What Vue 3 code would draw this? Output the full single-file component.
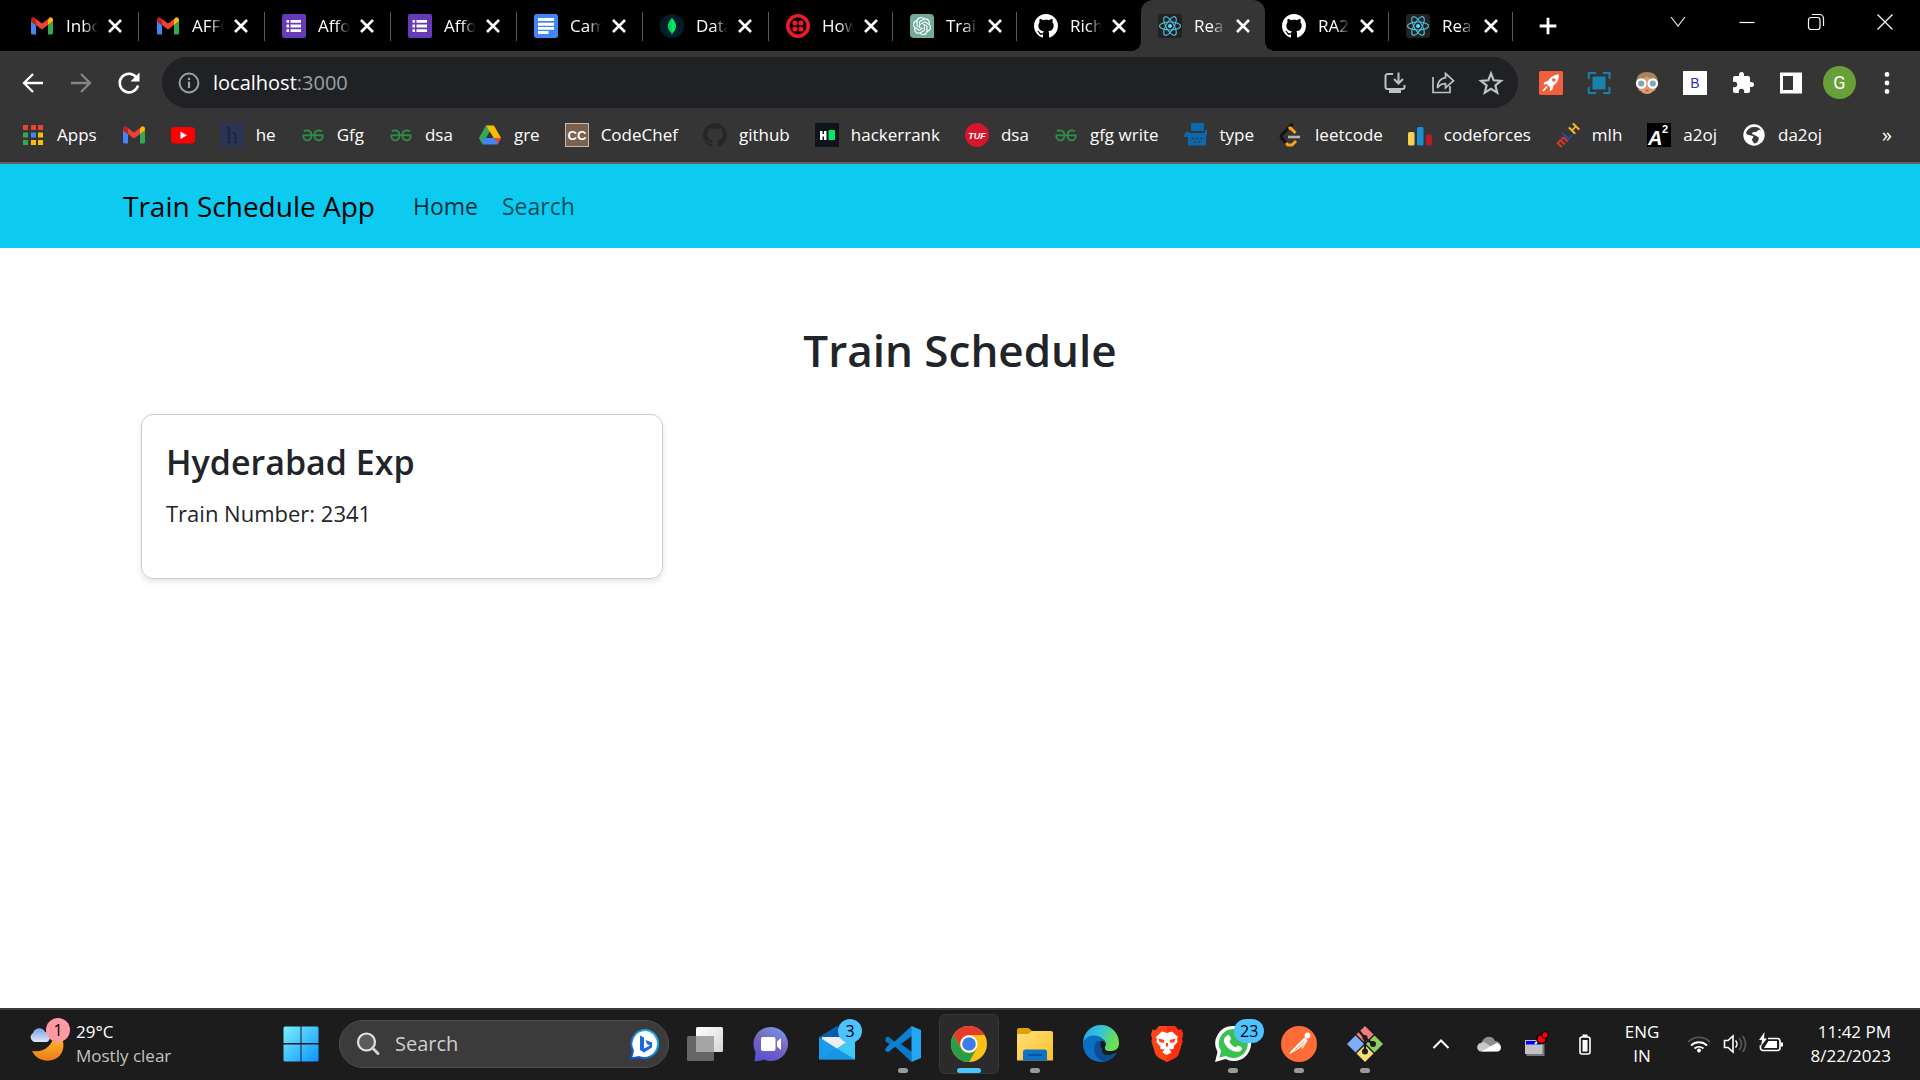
<script setup>
const icons = {
  gmail: '<path fill="#4285f4" d="M2.6 20.5H6V11L1 7.3V19a1.6 1.5 0 0 0 1.6 1.5z"/><path fill="#34a853" d="M18 20.5h3.4A1.6 1.5 0 0 0 23 19V7.3L18 11z"/><path fill="#fbbc04" d="M18 5.5V11l5-3.7V5.8c0-2.2-2.4-3.2-4-1.900z"/><path fill="#ea4335" d="M6 11V5l6 4.500L18 5v6l-6 4.500z"/><path fill="#c5221f" d="M1 5.800v1.500L6 11V5l-1-1.100C3.400 2.600 1 3.600 1 5.800z"/>',
  forms: '<rect width="24" height="24" rx="2" fill="#673ab7"/><g fill="#fff"><path d="M4.500 6h2.500v2.800H4.500zM4.500 10.600h2.500v2.800H4.500zM4.500 15.200h2.500V18H4.500zM8.500 6H19v2.800H8.500zM8.500 10.600H19v2.800H8.500zM8.500 15.200H19V18H8.500z"/></g>',
  docs: '<rect width="24" height="24" rx="2.500" fill="#4285f4"/><path fill="#fff" d="M4 4h16v3H4zM4 8.800h16v3H4zM4 13h16v2.800H4zM4 17h10.500v3H4z"/>',
  mongo: '<circle cx="12" cy="12" r="12" fill="#001e2b"/><path fill="#00ed64" d="M12 3.500c.6 1.700 4 4.200 4 8.800 0 3.600-2.300 5.700-3.500 6.600L12.300 21h-.6l-.2-2.100C10.300 18 8 15.900 8 12.300c0-4.600 3.400-7.100 4-8.800z"/><path fill="#00a84a" d="M12 4v15l-.4-.2C10.300 17.800 8.700 15.900 8.700 12.300 8.700 8.300 11.400 5.900 12 4z" opacity=".35"/>',
  twilio: '<circle cx="12" cy="12" r="10.200" fill="none" stroke="#eb1b24" stroke-width="3.600"/><g fill="#eb1b24"><circle cx="9" cy="9" r="2.600"/><circle cx="15" cy="9" r="2.600"/><circle cx="9" cy="15" r="2.600"/><circle cx="15" cy="15" r="2.600"/></g>',
  openai: '<path fill="#74aa9c" d="M4 0h16a4 4 0 0 1 4 4v20H4a4 4 0 0 1-4-4V4a4 4 0 0 1 4-4z"/><path transform="translate(2.900 2.900) scale(.76)" fill="#fff" d="M22.282 9.821a5.985 5.985 0 0 0-.516-4.911 6.046 6.046 0 0 0-6.510-2.900A6.065 6.065 0 0 0 4.981 4.182a5.985 5.985 0 0 0-3.998 2.900 6.046 6.046 0 0 0 .743 7.097 5.980 5.980 0 0 0 .511 4.911 6.051 6.051 0 0 0 6.515 2.900A5.985 5.985 0 0 0 13.260 24a6.056 6.056 0 0 0 5.772-4.206 5.989 5.989 0 0 0 3.998-2.900 6.056 6.056 0 0 0-.748-7.073zm-9.022 12.608a4.476 4.476 0 0 1-2.876-1.041l.142-.080 4.778-2.758a.795.795 0 0 0 .393-.681v-6.737l2.020 1.169a.071.071 0 0 1 .038.052v5.583a4.504 4.504 0 0 1-4.495 4.494zm-9.661-4.125a4.471 4.471 0 0 1-.535-3.014l.142.085 4.783 2.758a.771.771 0 0 0 .781 0l5.843-3.369v2.332a.080.080 0 0 1-.033.062L9.740 19.950a4.499 4.499 0 0 1-6.141-1.646zM2.341 7.896a4.485 4.485 0 0 1 2.366-1.973V11.600a.766.766 0 0 0 .388.677l5.814 3.354-2.020 1.169a.076.076 0 0 1-.071 0l-4.830-2.787A4.504 4.504 0 0 1 2.341 7.872zm16.596 3.856L13.104 8.364 15.119 7.200a.076.076 0 0 1 .071 0l4.830 2.791a4.494 4.494 0 0 1-.677 8.104v-5.677a.790.790 0 0 0-.407-.667zm2.011-3.023l-.142-.085-4.774-2.782a.776.776 0 0 0-.785 0L9.409 9.230V6.897a.066.066 0 0 1 .028-.062l4.830-2.787a4.499 4.499 0 0 1 6.680 4.660zM8.307 12.863l-2.020-1.164a.080.080 0 0 1-.038-.057V6.074a4.499 4.499 0 0 1 7.376-3.454l-.142.081L8.704 5.459a.795.795 0 0 0-.393.681zm1.098-2.365l2.602-1.500 2.607 1.500v2.999l-2.597 1.500-2.607-1.500z"/>',
  github: '<path transform="scale(1.500)" fill="#fff" d="M8 0C3.580 0 0 3.580 0 8c0 3.540 2.290 6.530 5.470 7.590.400.070.550-.170.550-.380 0-.190-.010-.820-.010-1.490-2.010.370-2.530-.490-2.690-.940-.090-.230-.480-.940-.820-1.130-.280-.150-.680-.520-.010-.530.630-.010 1.080.580 1.230.820.720 1.210 1.870.870 2.330.660.070-.520.280-.870.510-1.070-1.780-.200-3.640-.890-3.640-3.950 0-.870.310-1.590.820-2.150-.080-.200-.360-1.020.080-2.120 0 0 .670-.210 2.200.820.640-.180 1.320-.270 2-.270s1.360.090 2 .270c1.530-1.040 2.200-.820 2.200-.820.440 1.100.160 1.920.080 2.120.510.560.820 1.270.820 2.150 0 3.070-1.870 3.750-3.650 3.950.290.250.540.730.540 1.480 0 1.070-.010 1.930-.010 2.200 0 .210.150.460.550.380A8.010 8.010 0 0 0 16 8c0-4.420-3.580-8-8-8z"/>',
  react: '<rect width="24" height="24" rx="3" fill="#222"/><g fill="none" stroke="#4fc3e0" stroke-width="1.100"><ellipse cx="12" cy="12" rx="10.500" ry="4"/><ellipse cx="12" cy="12" rx="10.500" ry="4" transform="rotate(60 12 12)"/><ellipse cx="12" cy="12" rx="10.500" ry="4" transform="rotate(120 12 12)"/></g><circle cx="12" cy="12" r="2" fill="#61dafb"/>',
  close: '<path d="M6 6l12 12M18 6L6 18" stroke="#fff" stroke-width="2.600" fill="none"/>',
  plus: '<path d="M12 2v20M2 12h20" stroke="#fff" stroke-width="3.400" fill="none"/>',
  chevron: '<path d="M5 7l7 9 7-9" stroke="#e8e8e8" stroke-width="1.200" fill="none"/>',
  minimize: '<path d="M4.500 12.500h15" stroke="#fff" stroke-width="1.200"/>',
  restore: '<rect x="4.500" y="7.500" width="11.500" height="12" rx="2.500" fill="none" stroke="#fff" stroke-width="1.200"/><path d="M8 4.500h7.500a4 4 0 0 1 4 4V16" fill="none" stroke="#fff" stroke-width="1.200"/>',
  winclose: '<path d="M4.500 4.500l15 15M19.500 4.500l-15 15" stroke="#fff" stroke-width="1.200"/>',
  back: '<path d="M22 12H3.500M12 3l-9 9 9 9" fill="none" stroke="#fff" stroke-width="2.300"/>',
  forward: '<path d="M2 12h18.500M12 3l9 9-9 9" fill="none" stroke="#858585" stroke-width="2.300"/>',
  reload: '<path d="M19.500 6.500A9.300 9.300 0 1 0 21 14.500" fill="none" stroke="#fff" stroke-width="2.600"/><path d="M22.500 1.500v9h-9z" fill="#fff"/>',
  info: '<circle cx="12" cy="12" r="9.400" fill="none" stroke="#9aa0a6" stroke-width="2"/><path d="M10.900 10.500h2.200V17h-2.200zM10.900 6.800h2.200V9h-2.200z" fill="#9aa0a6"/>',
  install: '<path d="M10 3H4.500A2 2 0 0 0 2.500 5v11a2 2 0 0 0 2 2h15a2 2 0 0 0 2-2v-2M15.500 1.500V12M11 8l4.500 4.500L20 8" fill="none" stroke="#bdc1c6" stroke-width="2"/><path d="M6 19h12v3H6z" fill="#bdc1c6"/>',
  share: '<path d="M2 6v15.500h17V15" fill="none" stroke="#bdc1c6" stroke-width="1.700"/><path d="M14.500 2.500l8 7.200-8 7.200v-4.200c-4 0-6.500 1.500-8 4.300 0-6 3-9.500 8-10.300z" fill="none" stroke="#bdc1c6" stroke-width="1.700"/>',
  star: '<path d="M12 2.500l2.700 6.800 7.300.500-5.600 4.700 1.800 7.100L12 17.700l-6.200 3.900 1.800-7.100L2 9.800l7.300-.500z" fill="none" stroke="#bdc1c6" stroke-width="2.200"/>',
  rocket: '<rect width="24" height="24" rx="1.500" fill="#f25f3c"/><path d="M20 3.500c-5 0-8.500 2.500-10.500 6l-4 1.500-1 2.500 3.500-.3 3 3-.2 3.700 2.500-1.200 1.300-4.200c3.500-2.200 5.400-6 5.400-11z" fill="#fff"/><path d="M8 15.500l-4 4.500" stroke="#fff" stroke-width="1.800"/><circle cx="14.800" cy="9" r="1.800" fill="#f25f3c"/>',
  capture: '<path d="M5.500 5.500h13v13h-13z" fill="#1583ab"/><path d="M1.800 8V2H9M16 2h6.500v6M22.500 16v6H16M9 22H1.800v-6" fill="none" stroke="#1583ab" stroke-width="2"/>',
  face: '<path d="M1.500 14C0 5 5 1 12 1s12 4 10.500 13L20 20H4z" fill="#a5825a"/><path d="M4 11c1-4 5-3 8-6 2 3 7 2 8 6v4c0 5-4 8-8 8s-8-3-8-8z" fill="#dc9b76"/><circle cx="6.200" cy="12.500" r="4.200" fill="#7fa8b5" stroke="#fff" stroke-width="2.200"/><circle cx="17.800" cy="12.500" r="4.200" fill="#7fa8b5" stroke="#fff" stroke-width="2.200"/><path d="M10.500 19.500h3" stroke="#ae5545" stroke-width="1.500"/>',
  bold: '<rect width="24" height="24" fill="#fff"/><text x="12" y="17" text-anchor="middle" font-family="Liberation Sans, sans-serif" font-size="14" fill="#2c2fb8">B</text>',
  puzzle: '<path d="M20.500 11H19V7a2 2 0 0 0-2-2h-4V3.500a2.500 2.500 0 0 0-5 0V5H4a2 2 0 0 0-2 2v3.800h1.500a2.700 2.700 0 0 1 0 5.400H2V20a2 2 0 0 0 2 2h3.800v-1.500a2.700 2.700 0 0 1 5.400 0V22H17a2 2 0 0 0 2-2v-4h1.500a2.500 2.500 0 0 0 0-5z" fill="#fff"/>',
  panel: '<path d="M1 1.500h22v21H1zM4 5v14h10V5z" fill="#fff" fill-rule="evenodd"/>',
  dots: '<g fill="#fff"><circle cx="12" cy="3.500" r="2.400"/><circle cx="12" cy="12" r="2.400"/><circle cx="12" cy="20.500" r="2.400"/></g>',
  apps: '<path fill="#ea4335" d="M2 2h5v5H2zM10 2h5v5h-5zM17 2h5v5h-5z"/><path fill="#34a853" d="M2 9.500h5v5H2zM2 17h5v5H2z"/><path fill="#4285f4" d="M10 9.500h5v5h-5z"/><path fill="#fbbc04" d="M17 9.500h5v5h-5zM10 17h5v5h-5zM17 17h5v5h-5z"/>',
  youtube: '<rect y="4" width="24" height="16.500" rx="4" fill="#f00"/><path d="M9.500 8.500v7.500l6.500-3.700z" fill="#fff"/>',
  hackerearth: '<rect width="24" height="24" fill="#2c3454"/><text x="12" y="20" text-anchor="middle" font-family="Liberation Serif, serif" font-size="24" fill="#1c2446">h</text>',
  gfg: '<g fill="none" stroke="#2f8d46" stroke-width="1.800"><path d="M3 8.500C5 6.800 10.500 6.500 10.500 12c0 7-8 7-8.300 1"/><path d="M21 8.500C19 6.800 13.500 6.500 13.500 12c0 7 8 7 8.300 1"/><path d="M1.500 12.300h21"/></g>',
  drive: '<path fill="#188038" d="M8 2.500h4.500L5 21.500 1 15z"/><path fill="#34a853" d="M8 2.500l4 6L4 21l-3-6z"/><path fill="#fbbc04" d="M8 2.500h8L23 15h-7.500z"/><path fill="#4285f4" d="M5.500 15H23l-3.500 6.500h-15z"/><path fill="#ea4335" d="M16 15h7l-3 5.500z"/><path fill="#353535" d="M12 9l3.500 6h-7z"/>',
  codechef: '<rect x=".5" y=".5" width="23" height="23" fill="#7a6250" stroke="#c9b9a6"/><text x="12" y="17" text-anchor="middle" font-family="Liberation Sans, sans-serif" font-weight="700" font-size="13" fill="#fff">CC</text>',
  hackerrank: '<rect width="24" height="24" fill="#0e141e"/><path d="M5 8h2.500v3H9V8h2.500v9H9v-3.500H7.500V17H5z" fill="#fff"/><path d="M13.500 7H20v10h-6.500z" fill="#00ea64"/>',
  tuf: '<circle cx="12" cy="12" r="12" fill="#d6162c"/><text x="12" y="15.500" text-anchor="middle" font-family="Liberation Sans, sans-serif" font-style="italic" font-weight="700" font-size="9" fill="#fff">TUF</text>',
  typewriter: '<path fill="#0c69ac" d="M7 0h13v8H7zM0 12l2-3h3l1 1h14l1-1V7h2v5l-1 2v8.500H4V14H0z"/><g fill="#2d4258"><circle cx="8.500" cy="15.500" r="1.200"/><circle cx="13" cy="15.500" r="1.200"/><circle cx="17.500" cy="15.500" r="1.200"/><circle cx="10.500" cy="19" r="1.200"/><circle cx="15.500" cy="19" r="1.200"/></g>',
  leetcode: '<path d="M13.500 1L3 11.500a3 3 0 0 0 0 4L8 21" fill="none" stroke="#111" stroke-width="3"/><path d="M9.500 5.500l2-.500 5 5M7 20l2 2h4l4-4" fill="none" stroke="#ffa116" stroke-width="3"/><path d="M9 14h12" stroke="#b3b3b3" stroke-width="2.600"/>',
  codeforces: '<rect y="9" width="6.500" height="13.500" rx="1.500" fill="#f7cf52"/><rect x="9" y="4" width="6.500" height="18.500" rx="1.500" fill="#1b8fd1"/><rect x="18" y="11.500" width="6" height="11" rx="1.500" fill="#b71c26"/>',
  mlh: '<g transform="rotate(-45 12 12)" font-family="Liberation Sans, sans-serif" font-weight="700" font-size="13"><text x="-3" y="16" fill="#e73427">m</text><text x="8" y="16" fill="#1d539f">L</text><text x="16" y="16" fill="#f8b92a">H</text></g>',
  a2: '<rect width="24" height="24" fill="#000"/><text x="1" y="22" font-family="Liberation Sans, sans-serif" font-style="italic" font-weight="700" font-size="20" fill="#fff">A</text><text x="15" y="10" font-family="Liberation Sans, sans-serif" font-weight="700" font-size="11" fill="#fff">2</text>',
  globe: '<circle cx="12" cy="12" r="10.700" fill="#fff"/><path d="M13 4c-5 0-7 2-9 5.500 1 3 4 2.500 7 3.500 1 2-1 2-1 4l2 3.500c4 0 4-3 5-5-1-3-5-3-7-5 0-2 3-1 5-2 1-1 1-2 4-1.500C18 5.500 16 4 13 4z" fill="#3a3a3a"/>',
  weather: '<defs><linearGradient id="moon" x2="0" y2="1"><stop offset="0" stop-color="#ffc83a"/><stop offset="1" stop-color="#f07a18"/></linearGradient><linearGradient id="cloud" x2="0" y2="1"><stop offset="0" stop-color="#7f9fe8"/><stop offset="1" stop-color="#dfe8fb"/></linearGradient></defs><path d="M26 5c12 6 10 21 2 26-9 5-20 3-25-7 12 2 21-5 23-19z" fill="url(#moon)"/><path d="M5 15a5 5 0 0 1-1-9C6 0 14 0 16 5c5 0 7 8 2 10z" fill="url(#cloud)"/>',
  windows: '<defs><linearGradient id="win" x2="1" y2="1"><stop offset="0" stop-color="#79f0ff"/><stop offset="1" stop-color="#0a93ff"/></linearGradient></defs><path fill="url(#win)" d="M2 .5h15.500v16.500H.5V2A1.500 1.500 0 0 1 2 .5zM18.500.5H34A1.500 1.500 0 0 1 35.500 2v15h-17zM.5 18.500h17v17H2A1.500 1.500 0 0 1 .5 34zM18.500 18.500h17V34a1.500 1.500 0 0 1-1.500 1.500H18.500z"/>',
  search: '<circle cx="10.500" cy="10" r="8.500" fill="#5b5b5b" stroke="#e4e4e4" stroke-width="2.200"/><path d="M16.500 16l5.500 5.500" stroke="#d2d2d2" stroke-width="3" stroke-linecap="round"/>',
  bing: '<defs><linearGradient id="bing" x1="1" x2="0" y2="1"><stop offset="0" stop-color="#1fc8f0"/><stop offset="1" stop-color="#1448c8"/></linearGradient></defs><path d="M15.500 1A14 14 0 1 1 9 28L1 29.500l2-8A14 14 0 0 1 15.500 1z" fill="#fff" stroke="url(#bing)" stroke-width="2"/><path d="M10 6.500l4 2v11l6-3-3-1.500-1.500-4 6.500 2.500v5l-8 5-4-2.500z" fill="#1b68e0"/>',
  taskview: '<defs><linearGradient id="tv" x2="1" y2="1"><stop offset="0" stop-color="#fff"/><stop offset="1" stop-color="#d5d5d5"/></linearGradient></defs><rect x="9" y="1" width="27" height="25" rx="1.500" fill="url(#tv)"/><rect y="10" width="27" height="25" rx="1.500" fill="#666"/><path d="M9 10h18v16H9z" fill="#a5a5a5"/>',
  chat: '<defs><linearGradient id="chat" x1=".8" x2=".3" y2="1"><stop offset="0" stop-color="#6f9bf0"/><stop offset=".45" stop-color="#7c67bd"/><stop offset="1" stop-color="#5652cf"/></linearGradient></defs><path d="M18 1a17 17 0 1 1-7 32.500C8 35 4 35.500 1.500 35L2.500 26A17 17 0 0 1 18 1z" fill="url(#chat)"/><rect x="8" y="11" width="14.500" height="14" rx="2" fill="#fff"/><path d="M24 15.500l4-3.500v12l-4-3.500z" fill="#fff"/>',
  mail: '<path d="M0 11L18 0l18 11v6H0z" fill="#0a5bb0"/><path d="M3 11h30v12H3z" fill="#eee"/><path d="M0 11l18 11.500L36 11v22.500H0z" fill="#1a9bea"/><path d="M36 11v22.500L14 20.500l4 2z" fill="#3fcaf5"/><path d="M0 33.500h36L18 22.500z" fill="#1a8fe0" opacity=".6"/>',
  vscode: '<path d="M26.500 0L10 16 3 10.500.5 11.800v3.400L4.500 18l-4 4.500v2L3 26l7-5.500L26.500 36 27 26l-11-8 11-8z" fill="#0b78c8"/><path d="M27 8.500L3 26.500.5 25v-2.500L27 0z" fill="#1389d8" opacity=".5"/><path d="M26.500 0L36 4v28l-9.500 4z" fill="#25a6f2"/>',
  chrome: '<circle cx="18" cy="18" r="18" fill="#fbc116"/><path d="M2.400 9A18 18 0 0 1 33.600 9H18a9 9 0 0 0-7.800 13.500z" fill="#e33b2e"/><path d="M2.400 9A18 18 0 0 0 18 36l7.800-13.500A9 9 0 0 1 10.200 22.500z" fill="#2a9d47"/><circle cx="18" cy="18" r="8.500" fill="#fff"/><circle cx="18" cy="18" r="6.800" fill="#3b7ded"/>',
  explorer: '<defs><linearGradient id="fold" x2="1" y2="1"><stop offset="0" stop-color="#ffe07a"/><stop offset="1" stop-color="#fdc028"/></linearGradient></defs><path d="M0 12V4a2 2 0 0 1 2-2h9.500l3.500 3v5z" fill="#e0a000"/><path d="M15 5h19a2 2 0 0 1 2 2v27.500H0V8h11z" fill="url(#fold)"/><path d="M6 34.500V26a2.500 2.500 0 0 1 2.500-2.500h19A2.500 2.500 0 0 1 30 26v8.500z" fill="#0f74c8"/><path d="M11 29h14" stroke="#0a4c8c" stroke-width="1.500"/>',
  edge: '<defs><linearGradient id="edgeTop" x2="1" y2=".4"><stop offset="0" stop-color="#25a2ea"/><stop offset=".5" stop-color="#35c4d8"/><stop offset="1" stop-color="#6de04d"/></linearGradient></defs><path d="M0 17A18 18 0 0 1 36 17c0 7-5 8-9 8-5 0-6-2-5-4 4-7-7-14-22-4z" fill="url(#edgeTop)"/><path d="M0 17c2-8 14-10 20-4 3 3 2 6 1 7-5 3-2 14 12 7-3 6-9 9-15 9A18 18 0 0 1 0 17z" fill="#0d6fc4"/><path d="M14 15c-6 7-2 19 8 20.500C28 34 32 31 33.500 27c-12 6-18-1-13-7l-1-5z" fill="#0f4c94"/><path d="M19 14.500c-2 1.500-2.500 5-.5 7.500 2 2.300 3.500 2.800 5.500 3-2-1-3-2.500-2-4 1-2 .5-5-3-6.500z" fill="#1c1c1c"/>',
  brave: '<path d="M10 0h16l3.500 4 3-.5 1.500 5-1 4 .5 3-4 13-2.500 3L18 36l-9-4.500L6.500 28.500l-4-13 .5-3-1-4 1.500-5 3 .5z" fill="#fb4516"/><path d="M18 0h8l3.500 4 3-.5 1.500 5-1 4 .5 3-4 13-2.500 3L18 36z" fill="#ff2510" opacity=".7"/><path d="M18 7l5-1.500 6 5.500-1 2 .5 3-4 4.500.5 2-3 1-2-1 2.500 4L18 29l-4.500-2.500 2.500-4-2 1-3-1 .5-2-4-4.500.5-3-1-2 6-5.500z" fill="#fff"/><path d="M9.500 12.500l6 1.500-1 3-4-1zM26.500 12.500l-6 1.500 1 3 4-1zM17 17h2v3l-1 1-1-1z" fill="#fb4516"/>',
  whatsapp: '<path d="M18.500 0a17.500 17.500 0 1 1-8 33L0 36l2.500-10A17.500 17.500 0 0 1 18.500 0z" fill="#fff"/><path d="M18.500 3a14.500 14.500 0 1 1-7.500 27L4.500 31.500 6 25A14.500 14.500 0 0 1 18.500 3z" fill="#3bc150"/><path d="M12 9.500c2-1.500 3.500 1 4 3.500l-1.500 2.500c1 2.500 3 4.500 6 6L23 19.500c3 1 5 2 3.500 4.500C21 30 7 20 9 12.500z" fill="#fff"/>',
  postman: '<circle cx="18" cy="18" r="18" fill="#ff6c37"/><circle cx="26.500" cy="9.500" r="2.900" fill="#fff"/><path d="M23.500 11.500l3 2.500L19 22l-7.500 4.500L8 28.500l2-3.500 5-5z" fill="#fff"/><path d="M26 14l-5 8.500" stroke="#fff" stroke-width="1.200"/><path d="M14 24l9.500-9" stroke="#ff6c37" stroke-width=".8"/>',
  git: '<path d="M18 0l8.500 8.500L18 17l-8.500-8.500z" fill="#f47c80"/><path d="M27.500 9.500L36 18l-8.500 8.500L19 18z" fill="#8ccf62"/><path d="M8.500 9.500L17 18l-8.500 8.500L0 18z" fill="#7eadfa"/><path d="M18 19l8.500 8.500L18 36l-8.500-8.500z" fill="#fbdc78"/><path d="M12 5l6 7v14M18 12l8 6" stroke="#1c1c1c" stroke-width="2.200" fill="none"/><circle cx="18" cy="11.500" r="2.600" fill="#1c1c1c"/><circle cx="18" cy="25.500" r="3" fill="#1c1c1c"/><circle cx="26" cy="18" r="3" fill="#1c1c1c"/>',
  up: '<path d="M4.500 16l7.500-7.500 7.500 7.500" fill="none" stroke="#fff" stroke-width="2"/>',
  onedrive: '<path d="M4 19C-1 18-1 11 4.500 10.500 7 3.500 16 3 18 9c6 0 8 8 3 10z" fill="#8f8f8f"/><path d="M4 19.500c-4-.5-5-5-2-7.500l5-2 14.500 9z" fill="#c9c9c9"/><path d="M4.500 19.500L19.500 11c5 1 6 7 1.500 8.500z" fill="#fff"/>',
  device: '<path d="M1.500 10h18v14h-18z" fill="#777"/><path d="M0 8h17.500v14H0z" fill="#c3c3c3"/><path d="M1 9h15v3.500H1z" fill="#00f"/><path d="M10 12l4-4" stroke="#eee" stroke-width="2"/><circle cx="16.500" cy="7" r="4.600" fill="#f00" stroke="#000" stroke-width="1.500"/><circle cx="20" cy="3" r="3.300" fill="#f00" stroke="#000"/>',
  cell: '<rect x="7" y="5" width="10" height="17" rx="2" fill="none" stroke="#fff" stroke-width="1.600"/><path d="M9.500 8h5v11.500h-5zM9.500 2.500h5V5h-5z" fill="#fff"/>',
  wifi: '<path d="M1 10a15.500 15.500 0 0 1 22 0" fill="none" stroke="#555" stroke-width="1.800"/><path d="M4 13.500a11.500 11.500 0 0 1 16 0M7.500 16.500a7 7 0 0 1 9 0" fill="none" stroke="#fff" stroke-width="1.800"/><circle cx="12" cy="18.500" r="2" fill="#fff"/>',
  volume: '<path d="M1.500 8.500H5L10 4v16l-5-4.500H1.500z" fill="none" stroke="#fff" stroke-width="1.600"/><path d="M12.500 8.500a5 5 0 0 1 0 7" fill="none" stroke="#fff" stroke-width="1.600"/><path d="M16 6a8.500 8.500 0 0 1 0 12M19.500 4a12 12 0 0 1 0 16" fill="none" stroke="#5a5a5a" stroke-width="1.600"/>',
  battery: '<path d="M9 6.500h9.500a2.500 2.500 0 0 1 2.500 2.500v7a2.500 2.500 0 0 1-2.500 2.500H4A2.500 2.500 0 0 1 1.500 16v-3" fill="none" stroke="#fff" stroke-width="1.700"/><path d="M9.500 9h8.500v7H5zM21.500 10.500H24v4h-2.500z" fill="#fff"/><path d="M5.500 0L0 8h3L2 14l6-7.500H5z" fill="#fff"/>'
}

const tabs = [
  { icon: 'gmail', title: 'Inbo', wide: true },
  { icon: 'gmail', title: 'AFFO', wide: true },
  { icon: 'forms', title: 'Affo', wide: true },
  { icon: 'forms', title: 'Affo', wide: true },
  { icon: 'docs', title: 'Cam', wide: true },
  { icon: 'mongo', title: 'Data', wide: true },
  { icon: 'twilio', title: 'How' },
  { icon: 'openai', title: 'Trai' },
  { icon: 'github', title: 'Rich', last: true },
  { icon: 'react', title: 'Rea', active: true },
  { icon: 'github', title: 'RA2' },
  { icon: 'react', title: 'Rea' }
]

const extensions = ['rocket', 'capture', 'face', 'bold', 'puzzle', 'panel']

const bookmarks = [
  { icon: 'apps', label: 'Apps' },
  { icon: 'gmail', name: 'Gmail' },
  { icon: 'youtube', name: 'YouTube' },
  { icon: 'hackerearth', label: 'he' },
  { icon: 'gfg', label: 'Gfg' },
  { icon: 'gfg', label: 'dsa' },
  { icon: 'drive', label: 'gre' },
  { icon: 'codechef', label: 'CodeChef' },
  { icon: 'github', label: 'github', dim: true },
  { icon: 'hackerrank', label: 'hackerrank' },
  { icon: 'tuf', label: 'dsa' },
  { icon: 'gfg', label: 'gfg write' },
  { icon: 'typewriter', label: 'type' },
  { icon: 'leetcode', label: 'leetcode' },
  { icon: 'codeforces', label: 'codeforces' },
  { icon: 'mlh', label: 'mlh' },
  { icon: 'a2', label: 'a2oj' },
  { icon: 'globe', label: 'da2oj' }
]

const taskApps = [
  { icon: 'taskview', name: 'Task view' },
  { icon: 'chat', name: 'Chat' },
  { icon: 'mail', name: 'Mail', badge: '3' },
  { icon: 'vscode', name: 'Visual Studio Code', open: true },
  { icon: 'chrome', name: 'Google Chrome', open: true, active: true },
  { icon: 'explorer', name: 'File Explorer', open: true },
  { icon: 'edge', name: 'Microsoft Edge' },
  { icon: 'brave', name: 'Brave' },
  { icon: 'whatsapp', name: 'WhatsApp', open: true, badge: '23' },
  { icon: 'postman', name: 'Postman', open: true },
  { icon: 'git', name: 'Git Bash', open: true }
]

const trains = [{ name: 'Hyderabad Exp', number: 2341 }]
</script>

<template>
  <div class="screen">
    <header class="browser">
      <div class="tab-strip">
        <div
          v-for="(tab, i) in tabs"
          :key="i"
          class="tab"
          :class="{ wide: tab.wide, active: tab.active, last: tab.last }"
        >
          <svg class="icon" viewBox="0 0 24 24" v-html="icons[tab.icon]"></svg>
          <span class="tab-title">{{ tab.title }}</span>
          <button class="plain" aria-label="Close tab">
            <svg class="icon" viewBox="0 0 24 24" v-html="icons.close"></svg>
          </button>
        </div>
        <button class="plain new-tab" aria-label="New tab">
          <svg viewBox="0 0 24 24" width="20" height="20" v-html="icons.plus"></svg>
        </button>
        <div class="window-controls">
          <button v-for="c in ['chevron', 'minimize', 'restore', 'winclose']" :key="c" class="plain" :aria-label="c">
            <svg class="icon" viewBox="0 0 24 24" v-html="icons[c]"></svg>
          </button>
        </div>
      </div>

      <div class="toolbar">
        <button v-for="c in ['back', 'forward', 'reload']" :key="c" class="plain" :aria-label="c">
          <svg class="icon" viewBox="0 0 24 24" v-html="icons[c]"></svg>
        </button>
        <div class="omnibox">
          <svg class="icon" viewBox="0 0 24 24" v-html="icons.info"></svg>
          <span class="url">localhost<span class="port">:3000</span></span>
          <button v-for="c in ['install', 'share', 'star']" :key="c" class="plain" :aria-label="c">
            <svg class="icon" viewBox="0 0 24 24" v-html="icons[c]"></svg>
          </button>
        </div>
        <button v-for="c in extensions" :key="c" class="plain" :aria-label="c">
          <svg class="icon" viewBox="0 0 24 24" v-html="icons[c]"></svg>
        </button>
        <button class="plain avatar">G</button>
        <button class="plain" aria-label="Menu">
          <svg class="icon" viewBox="0 0 24 24" v-html="icons.dots"></svg>
        </button>
      </div>

      <nav class="bookmarks" aria-label="Bookmarks">
        <a v-for="(b, i) in bookmarks" :key="i" href="#" :class="{ dim: b.dim }" :aria-label="b.label || b.name">
          <svg class="icon" viewBox="0 0 24 24" v-html="icons[b.icon]"></svg>
          <span v-if="b.label">{{ b.label }}</span>
        </a>
        <button class="plain more" aria-label="More bookmarks">»</button>
      </nav>
    </header>

    <div class="page">
      <nav class="navbar">
        <div class="container nav-row">
          <a class="brand" href="#">Train Schedule App</a>
          <a class="nav-link current" href="#">Home</a>
          <a class="nav-link" href="#">Search</a>
        </div>
      </nav>
      <main class="container">
        <h1>Train Schedule</h1>
        <div class="trains">
          <article v-for="t in trains" :key="t.number" class="card">
            <h2>{{ t.name }}</h2>
            <p>Train Number: {{ t.number }}</p>
          </article>
        </div>
      </main>
    </div>

    <footer class="taskbar">
      <div class="weather">
        <div class="weather-icon">
          <svg viewBox="0 0 35 35" width="35" height="35" v-html="icons.weather"></svg>
          <span class="badge alert">1</span>
        </div>
        <div class="weather-text">
          <span>29°C</span>
          <span class="muted">Mostly clear</span>
        </div>
      </div>
      <button class="plain tile" aria-label="Start">
        <svg class="app-icon" viewBox="0 0 36 36" v-html="icons.windows"></svg>
      </button>
      <div class="search">
        <svg class="icon" viewBox="0 0 24 24" v-html="icons.search"></svg>
        <input type="text" placeholder="Search" aria-label="Search" />
        <svg viewBox="0 0 31 31" width="31" height="31" v-html="icons.bing"></svg>
      </div>
      <button
        v-for="app in taskApps"
        :key="app.name"
        class="plain tile"
        :class="{ open: app.open, active: app.active }"
        :aria-label="app.name"
      >
        <svg class="app-icon" viewBox="0 0 36 36" v-html="icons[app.icon]"></svg>
        <span v-if="app.badge" class="badge">{{ app.badge }}</span>
      </button>
      <div class="tray">
        <div class="tray-apps">
          <svg v-for="c in ['up', 'onedrive', 'device', 'cell']" :key="c" class="icon" viewBox="0 0 24 24" v-html="icons[c]"></svg>
        </div>
        <div class="language"><span>ENG</span><span>IN</span></div>
        <div class="tray-status">
          <svg v-for="c in ['wifi', 'volume', 'battery']" :key="c" class="icon" viewBox="0 0 24 24" v-html="icons[c]"></svg>
        </div>
        <div class="clock"><span>11:42 PM</span><span>8/22/2023</span></div>
      </div>
    </footer>
  </div>
</template>

<style>
body {
  margin: 0;
  background: #fff;
}
</style>

<style scoped>
* {
  box-sizing: border-box;
}
.screen {
  min-height: 100vh;
  display: flex;
  flex-direction: column;
  font-family: "Open Sans", "Noto Sans", sans-serif;
  color: #212529;
}
svg {
  display: block;
  flex: none;
  overflow: visible;
}
a {
  color: inherit;
  text-decoration: none;
}
.icon {
  width: 24px;
  height: 24px;
}
.plain {
  flex: none;
  display: flex;
  align-items: center;
  justify-content: center;
  padding: 0;
  border: 0;
  background: none;
  color: inherit;
  font: inherit;
}

.browser {
  background: #353535;
  color: #fff;
  font-size: 17px;
  border-bottom: 2px solid #616161;
}
.tab-strip {
  display: flex;
  height: 51px;
  padding-left: 13px;
  background: #000;
}
.tab {
  position: relative;
  flex: none;
  display: flex;
  align-items: center;
  width: 124px;
  height: 51px;
  padding-left: 17px;
}
.tab.wide {
  width: 126px;
}
.tab::after {
  content: "";
  position: absolute;
  right: 0;
  top: 12px;
  width: 1px;
  height: 29px;
  background: #5a5a5a;
}
.tab.last::after {
  display: none;
}
.tab.active {
  background: #353535;
  border-radius: 12px 12px 0 0;
}
.tab.active::before,
.tab.active::after {
  content: "";
  position: absolute;
  top: auto;
  bottom: 0;
  width: 10px;
  height: 10px;
}
.tab.active::before {
  left: -10px;
  background: radial-gradient(circle at 0 0, transparent 10px, #353535 10px);
}
.tab.active::after {
  right: -10px;
  background: radial-gradient(circle at 100% 0, transparent 10px, #353535 10px);
}
.tab-title {
  width: 32px;
  margin: 0 5px 0 12px;
  overflow: hidden;
  white-space: nowrap;
  line-height: 24px;
  -webkit-mask-image: linear-gradient(90deg, #000 55%, transparent);
  mask-image: linear-gradient(90deg, #000 55%, transparent);
}
.new-tab {
  width: 66px;
  padding-left: 4px;
}
.window-controls {
  display: flex;
  gap: 45px;
  height: 43px;
  margin-left: auto;
  padding-right: 23px;
}
.toolbar {
  display: flex;
  align-items: center;
  gap: 24px;
  height: 63px;
  padding: 0 21px;
}
.omnibox {
  flex: 1;
  display: flex;
  align-items: center;
  gap: 24px;
  height: 51px;
  margin-right: -3px;
  margin-left: -3px;
  padding: 0 15px;
  border-radius: 26px;
  background: #202124;
}
.url {
  flex: 1;
  margin-left: -12px;
  font-size: 20px;
  line-height: 28px;
}
.port {
  color: #9aa0a6;
}
.avatar {
  width: 33px;
  height: 33px;
  margin: 0 -5px 0 -4px;
  border-radius: 50%;
  background: #689f38;
  font-family: Roboto, sans-serif;
  font-size: 18px;
}
.bookmarks {
  display: flex;
  align-items: center;
  gap: 25px;
  height: 48px;
  padding: 0 21px 6px;
}
.bookmarks a {
  display: flex;
  align-items: center;
  gap: 12px;
  white-space: nowrap;
  line-height: 24px;
}
.bookmarks .dim .icon {
  filter: brightness(0.15);
}
.more {
  width: 24px;
  margin-left: auto;
  font-size: 20px;
  line-height: 24px;
}

.page {
  flex: 1;
}
.container {
  max-width: 1710px;
  margin: 0 auto;
  padding: 0 18px;
}
.navbar {
  background: #0dcaf0;
}
.nav-row {
  display: flex;
  align-items: center;
  height: 84px;
}
.brand {
  margin-right: 26px;
  font-size: 28px;
  color: #000;
}
.nav-link {
  padding: 0 12px;
  font-size: 23px;
  color: rgba(0, 0, 0, 0.65);
}
.nav-link.current {
  color: rgba(0, 0, 0, 0.8);
}
h1 {
  margin: 71px 0 33px;
  text-align: center;
  font-size: 44px;
  font-weight: 600;
  line-height: 62px;
}
.trains {
  display: grid;
  grid-template-columns: repeat(3, 1fr);
}
.card {
  margin: 0 18px;
  padding: 24px;
  min-height: 165px;
  border: 1px solid #ccc;
  border-radius: 12px;
  box-shadow: 0 3px 6px rgba(0, 0, 0, 0.1);
}
h2 {
  margin: 0 0 10px;
  font-size: 34px;
  font-weight: 600;
  line-height: 46px;
}
p {
  margin: 0;
  font-size: 22px;
  line-height: 36px;
}

.taskbar {
  display: flex;
  align-items: center;
  height: 72px;
  padding-bottom: 2px;
  border-top: 2px solid #3b3b3b;
  background: #1c1c1c;
  color: #fff;
  font-size: 17px;
  line-height: 24px;
}
.weather {
  flex: none;
  display: flex;
  align-items: center;
  gap: 12px;
  width: 268px;
  padding-left: 29px;
}
.weather-icon {
  position: relative;
}
.weather-text,
.language,
.clock {
  display: flex;
  flex-direction: column;
}
.muted {
  color: #c4c4c4;
}
.badge {
  position: absolute;
  top: 5px;
  left: 34px;
  min-width: 24px;
  height: 24px;
  padding: 0 6px;
  border-radius: 12px;
  background: #4cc2ff;
  color: #000;
  font-size: 16px;
  line-height: 24px;
  text-align: center;
}
.badge.alert {
  top: -9px;
  left: 17px;
  background: #ff99a4;
}
.tile {
  position: relative;
  width: 66px;
  height: 60px;
}
.app-icon {
  width: 36px;
  height: 36px;
}
.tile.active::before {
  content: "";
  position: absolute;
  inset: 0 3px;
  border: 1px solid #383838;
  border-radius: 6px;
  background: #2b2b2b;
}
.tile.active .app-icon {
  position: relative;
}
.tile.open::after {
  content: "";
  position: absolute;
  bottom: 1px;
  left: 28px;
  width: 10px;
  height: 5px;
  border-radius: 3px;
  background: #9a9a9a;
}
.tile.active::after {
  left: 21px;
  width: 24px;
  background: #4cc2ff;
}
.search {
  flex: none;
  display: flex;
  align-items: center;
  gap: 15px;
  width: 330px;
  height: 48px;
  margin: 0 3px 0 5px;
  padding: 0 7px 0 16px;
  border: 1px solid #505050;
  border-radius: 24px;
  background: #3b3b3b;
}
.search input {
  flex: 1;
  min-width: 0;
  padding: 0;
  border: 0;
  outline: 0;
  background: none;
  color: #fff;
  font: inherit;
  font-size: 20px;
}
.search input::placeholder {
  color: #cfcfcf;
  opacity: 1;
}
.tray {
  display: flex;
  align-items: center;
  margin-left: auto;
  padding-right: 29px;
}
.tray-apps {
  display: flex;
  gap: 24px;
}
.language {
  width: 90px;
  align-items: center;
}
.tray-status {
  display: flex;
  gap: 12px;
}
.clock {
  width: 108px;
  align-items: flex-end;
}
</style>
